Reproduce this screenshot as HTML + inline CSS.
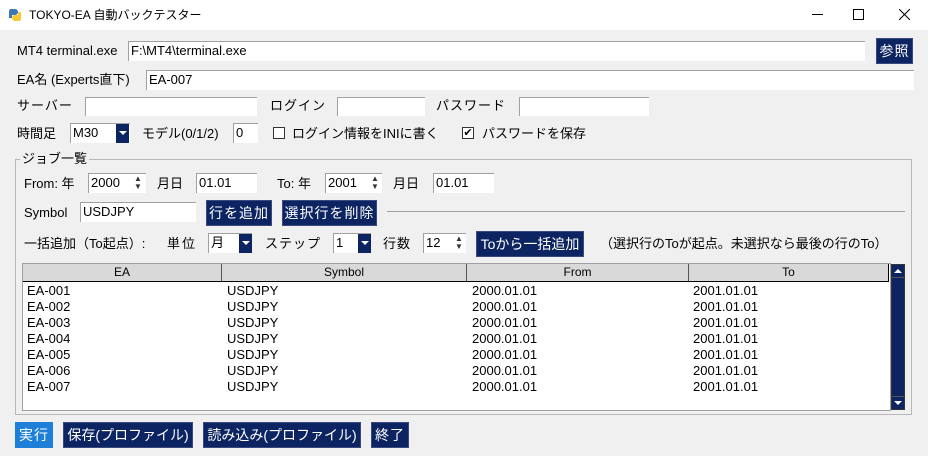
<!DOCTYPE html>
<html><head><meta charset="utf-8"><style>
*{box-sizing:border-box;margin:0;padding:0}
body{width:928px;height:456px;background:#f0f0f0;font-family:"Liberation Sans","Noto Sans CJK JP",sans-serif;font-size:13px;color:#000;position:relative;overflow:hidden}
.a{position:absolute;white-space:nowrap}
.t{position:absolute;line-height:16px;white-space:nowrap}
.in{position:absolute;background:#fff;border-top:1px solid #a0a0a0;border-left:1px solid #a0a0a0;padding-left:2px;line-height:17px;font-size:13px}
.btn{position:absolute;background:#0c2461;color:#fff;border:1px solid #3a4a80;text-align:center;font-size:14px;letter-spacing:1px}
.arr{position:absolute;background:#0c2461;width:13px}
.arr:after{content:"";position:absolute;left:3px;top:7px;border-left:4px solid transparent;border-right:4px solid transparent;border-top:4px solid #fff}
.spin{position:absolute;width:10px;font-size:8px;line-height:8px;text-align:center;color:#333}
.row{position:absolute;left:0;width:866px;height:16px;line-height:16px}
.row span{position:absolute}
</style></head><body>
<div class="a" style="left:0;top:0;width:928px;height:30px;background:#fff"></div>
<svg class="a" style="left:7px;top:7px" width="16" height="16" viewBox="0 0 16 16"><path d="M3 2h5a3 3 0 0 1 0 6H5v3H2V4z" fill="#3b77b0"/><path d="M13 14H8a3 3 0 0 1 0-6h3V5h3v7z" fill="#f6c932"/></svg>
<div class="t" style="left:29px;top:7px;font-size:12px">TOKYO-EA 自動バックテスター</div>
<div class="a" style="left:812px;top:14px;width:11px;height:1px;background:#000"></div>
<div class="a" style="left:853px;top:9px;width:11px;height:11px;border:1px solid #000"></div>
<svg class="a" style="left:899px;top:9px" width="11" height="11" viewBox="0 0 11 11"><path d="M0 0L11 11M11 0L0 11" stroke="#000" stroke-width="1"/></svg>

<div class="t" style="left:17px;top:43px">MT4 terminal.exe</div>
<div class="in" style="left:128px;top:41px;width:737px;height:20px">F:\MT4\terminal.exe</div>
<div class="btn" style="left:876px;top:38px;width:37px;height:26px;line-height:24px">参照</div>

<div class="t" style="left:17px;top:72px">EA名 (Experts直下)</div>
<div class="in" style="left:146px;top:70px;width:768px;height:20px">EA-007</div>

<div class="t" style="left:17px;top:98px;letter-spacing:1px">サーバー</div>
<div class="in" style="left:85px;top:97px;width:172px;height:19px"></div>
<div class="t" style="left:270px;top:98px;letter-spacing:1px">ログイン</div>
<div class="in" style="left:337px;top:97px;width:88px;height:19px"></div>
<div class="t" style="left:436px;top:98px;letter-spacing:1px">パスワード</div>
<div class="in" style="left:519px;top:97px;width:130px;height:19px"></div>

<div class="t" style="left:17px;top:126px">時間足</div>
<div class="in" style="left:70px;top:123px;width:60px;height:20px">M30</div>
<div class="arr" style="left:116px;top:124px;height:19px"></div>
<div class="t" style="left:142px;top:126px">モデル(0/1/2)</div>
<div class="in" style="left:233px;top:123px;width:25px;height:20px">0</div>
<div class="a" style="left:273px;top:127px;width:12px;height:12px;border:1px solid #333;background:#fff"></div>
<div class="t" style="left:292px;top:126px">ログイン情報をINIに書く</div>
<div class="a" style="left:462px;top:127px;width:12px;height:12px;border:1px solid #333;background:#fff;font-size:11px;line-height:10px;text-align:center">✔</div>
<div class="t" style="left:482px;top:126px">パスワードを保存</div>

<div class="a" style="left:15px;top:159px;width:897px;height:256px;border:1px solid #b8b8b8"></div>
<div class="t" style="left:20px;top:151px;background:#f0f0f0;padding:0 2px">ジョブ一覧</div>

<div class="t" style="left:24px;top:176px">From: 年</div>
<div class="in" style="left:88px;top:173px;width:58px;height:20px">2000</div>
<div class="spin" style="left:133px;top:175px">▲<br>▼</div>
<div class="t" style="left:157px;top:176px">月日</div>
<div class="in" style="left:196px;top:173px;width:61px;height:20px">01.01</div>
<div class="t" style="left:277px;top:176px">To: 年</div>
<div class="in" style="left:325px;top:173px;width:57px;height:20px">2001</div>
<div class="spin" style="left:370px;top:175px">▲<br>▼</div>
<div class="t" style="left:393px;top:176px">月日</div>
<div class="in" style="left:433px;top:173px;width:61px;height:20px">01.01</div>

<div class="t" style="left:24px;top:205px">Symbol</div>
<div class="in" style="left:80px;top:202px;width:116px;height:20px">USDJPY</div>
<div class="btn" style="left:206px;top:200px;width:66px;height:26px;line-height:24px">行を追加</div>
<div class="btn" style="left:282px;top:200px;width:95px;height:26px;line-height:24px">選択行を削除</div>
<div class="a" style="left:387px;top:211px;width:518px;height:1px;background:#a0a0a0"></div>

<div class="t" style="left:24px;top:236px">一括追加（To起点）:</div>
<div class="t" style="left:167px;top:236px;letter-spacing:2px">単位</div>
<div class="in" style="left:208px;top:233px;width:44px;height:20px">月</div>
<div class="arr" style="left:239px;top:234px;height:19px"></div>
<div class="t" style="left:265px;top:236px;letter-spacing:1px">ステップ</div>
<div class="in" style="left:333px;top:233px;width:38px;height:20px">1</div>
<div class="arr" style="left:358px;top:234px;height:19px"></div>
<div class="t" style="left:383px;top:236px;letter-spacing:1px">行数</div>
<div class="in" style="left:423px;top:233px;width:43px;height:20px">12</div>
<div class="spin" style="left:454px;top:235px">▲<br>▼</div>
<div class="btn" style="left:476px;top:231px;width:108px;height:26px;line-height:24px;letter-spacing:0">Toから一括追加</div>
<div class="t" style="left:600px;top:236px">（選択行のToが起点。未選択なら最後の行のTo）</div>

<div class="a" style="left:22px;top:263px;width:869px;height:148px;background:#fff;border:1px solid #a0a0a0">
<div class="a" style="left:0;top:0;width:866px;height:18px;background:#d9d9d9;border-bottom:1px solid #000;border-right:1px solid #000;font-size:12px;line-height:17px">
<span class="a" style="left:0;width:199px;text-align:center;border-right:1px solid #555;height:17px">EA</span>
<span class="a" style="left:199px;width:245px;text-align:center;border-right:1px solid #555;height:17px">Symbol</span>
<span class="a" style="left:444px;width:222px;text-align:center;border-right:1px solid #555;height:17px">From</span>
<span class="a" style="left:666px;width:199px;text-align:center">To</span>
</div>
<div class="row" style="top:19px"><span style="left:4px">EA-001</span><span style="left:204px">USDJPY</span><span style="left:449px">2000.01.01</span><span style="left:670px">2001.01.01</span></div>
<div class="row" style="top:35px"><span style="left:4px">EA-002</span><span style="left:204px">USDJPY</span><span style="left:449px">2000.01.01</span><span style="left:670px">2001.01.01</span></div>
<div class="row" style="top:51px"><span style="left:4px">EA-003</span><span style="left:204px">USDJPY</span><span style="left:449px">2000.01.01</span><span style="left:670px">2001.01.01</span></div>
<div class="row" style="top:67px"><span style="left:4px">EA-004</span><span style="left:204px">USDJPY</span><span style="left:449px">2000.01.01</span><span style="left:670px">2001.01.01</span></div>
<div class="row" style="top:83px"><span style="left:4px">EA-005</span><span style="left:204px">USDJPY</span><span style="left:449px">2000.01.01</span><span style="left:670px">2001.01.01</span></div>
<div class="row" style="top:99px"><span style="left:4px">EA-006</span><span style="left:204px">USDJPY</span><span style="left:449px">2000.01.01</span><span style="left:670px">2001.01.01</span></div>
<div class="row" style="top:115px"><span style="left:4px">EA-007</span><span style="left:204px">USDJPY</span><span style="left:449px">2000.01.01</span><span style="left:670px">2001.01.01</span></div>
</div>
<div class="a" style="left:891px;top:264px;width:14px;height:146px;background:#0c2461;border:1px solid #333"></div>
<div class="a" style="left:892px;top:265px;width:12px;height:13px;border-bottom:1px solid #555"></div>
<div class="a" style="left:894px;top:269px;border-left:4px solid transparent;border-right:4px solid transparent;border-bottom:4px solid #fff"></div>
<div class="a" style="left:892px;top:396px;width:12px;height:13px;border-top:1px solid #555"></div>
<div class="a" style="left:894px;top:401px;border-left:4px solid transparent;border-right:4px solid transparent;border-top:4px solid #fff"></div>

<div class="btn" style="left:15px;top:422px;width:38px;height:26px;line-height:24px;background:#1e7fd8;border-color:#1e7fd8">実行</div>
<div class="btn" style="left:63px;top:422px;width:130px;height:26px;line-height:24px;letter-spacing:0">保存(プロファイル)</div>
<div class="btn" style="left:203px;top:422px;width:158px;height:26px;line-height:24px;letter-spacing:0">読み込み(プロファイル)</div>
<div class="btn" style="left:371px;top:422px;width:38px;height:26px;line-height:24px">終了</div>
</body></html>
